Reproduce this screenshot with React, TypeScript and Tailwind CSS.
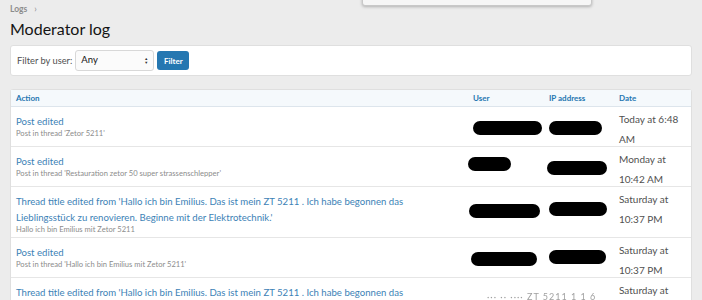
import React from "react";

type Row = {
  title: string;
  sub: string;
  date: [string, string];
  user: string; // redaction blob placement
  ip: string;
};

const ROWS: Row[] = [
  {
    title: "Post edited",
    sub: "Post in thread 'Zetor 5211'",
    date: ["Today at 6:48", "AM"],
    user: "ml-0 mt-[5px] w-[69px] h-[14px]",
    ip: "ml-0 mt-[5px] w-[53px] h-[14px]",
  },
  {
    title: "Post edited",
    sub: "Post in thread 'Restauration zetor 50 super strassenschlepper'",
    date: ["Monday at", "10:42 AM"],
    user: "-ml-[5px] mt-[1px] w-[43px] h-[14px]",
    ip: "-ml-[2px] mt-[5px] w-[60px] h-[14px]",
  },
  {
    title:
      "Thread title edited from 'Hallo ich bin Emilius. Das ist mein ZT 5211 . Ich habe begonnen das Lieblingsstück zu renovieren. Beginne mit der Elektrotechnik.'",
    sub: "Hallo ich bin Emilius mit Zetor 5211",
    date: ["Saturday at", "10:37 PM"],
    user: "-ml-[4px] mt-[8px] w-[71px] h-[14px]",
    ip: "ml-0 mt-[6px] w-[58px] h-[14px]",
  },
  {
    title: "Post edited",
    sub: "Post in thread 'Hallo ich bin Emilius mit Zetor 5211'",
    date: ["Saturday at", "10:37 PM"],
    user: "-ml-[2px] mt-[5px] w-[66px] h-[14px]",
    ip: "ml-0 mt-[3px] w-[57px] h-[14px]",
  },
];

export default function App() {
  return (
    <div className="relative h-[300px] overflow-hidden bg-[#ececec] px-[10px] font-['Lato',sans-serif] text-[#141414]">
      {/* dropdown overlay at the top */}
      <div className="absolute left-[362px] top-[-6px] h-[12px] w-[230px] rounded-[3px] border border-[#c8c8c8] bg-[#f6f6f6] shadow-[0_1px_3px_rgba(0,0,0,0.25)]" />

      {/* breadcrumb */}
      <div className="flex items-center gap-[7px] pt-[3px] h-[15px] text-[8.5px] font-bold text-[#8c8c8c]">
        <span>Logs</span>
        <span className="font-normal text-[9px]">›</span>
      </div>

      <h1 className="mt-[3px] text-[16px] leading-[22px] font-normal text-[#141414]">Moderator log</h1>

      {/* filter block */}
      <div className="mt-[5px] flex items-center h-[31px] w-[682px] rounded-[3px] border border-[#dfdfdf] bg-white pl-[6px]">
        <span className="text-[9.3px] text-[#505050]">Filter by user:</span>
        <div className="ml-[3px] flex items-center justify-between h-[21px] w-[79px] rounded-[3px] border border-[#d8d8d8] bg-[#fbfbfb] px-[5px] text-[9.5px] text-[#141414]">
          <span>Any</span>
          <span className="flex flex-col text-[4px] leading-[4px] text-[#333]">
            <span>▲</span>
            <span>▼</span>
          </span>
        </div>
        <button className="ml-[3px] h-[19px] w-[32px] rounded-[3px] bg-[#2577b1] text-[8px] font-bold text-white">
          Filter
        </button>
      </div>

      {/* table */}
      <div className="mt-[13px] w-[682px] rounded-t-[3px] border border-[#dfdfdf] bg-white">
        <div className="flex h-[17px] items-center border-b border-[#dde5ec] bg-[#f5f9fc] text-[8px] font-bold text-[#2577b1]">
          <div className="w-[462px] pl-[5px]">Action</div>
          <div className="w-[76px]">User</div>
          <div className="w-[70px]">IP address</div>
          <div className="flex-1">Date</div>
        </div>

        {ROWS.map((r, i) => (
          <div key={i} className="flex border-b border-[#e6e6e6] min-h-[40px]">
            <div className="w-[462px] pl-[5px] pr-[14px] pt-[7px] pb-[3px]">
              <div className="text-[9.6px] leading-[16px] text-[#3c82b6]">{r.title}</div>
              <div className="-mt-[2px] text-[7.6px] leading-[10px] text-[#8c8c8c]">{r.sub}</div>
            </div>
            <div className="w-[76px] pt-[9px]">
              <div className={`rounded-full bg-black ${r.user}`} />
            </div>
            <div className="w-[70px] pt-[9px]">
              <div className={`rounded-full bg-black ${r.ip}`} />
            </div>
            <div className="w-[62px] pt-[2px] -mb-[3px] text-[10px] leading-[20px] text-[#505050]">
              <div>{r.date[0]}</div>
              <div>{r.date[1]}</div>
            </div>
          </div>
        ))}

        <div className="flex min-h-[40px]">
          <div className="w-[462px] pl-[5px] pr-[14px] pt-[7px]">
            <div className="text-[9.6px] leading-[16px] text-[#3c82b6]">
              Thread title edited from 'Hallo ich bin Emilius. Das ist mein ZT 5211 . Ich habe begonnen das
              Lieblingsstück zu renovieren. Beginne mit der Elektrotechnik.'
            </div>
          </div>
          <div className="w-[146px] pt-[12px] pl-[14px] text-[9px] tracking-[1px] text-[#a0a0a0] blur-[0.6px] whitespace-nowrap">
            ··· ·· ···· ZT 5211 1 1 6
          </div>
          <div className="w-[62px] pt-[2px] text-[10px] leading-[20px] text-[#505050]">
            <div>Saturday at</div>
            <div>10:37 PM</div>
          </div>
        </div>
      </div>
    </div>
  );
}
